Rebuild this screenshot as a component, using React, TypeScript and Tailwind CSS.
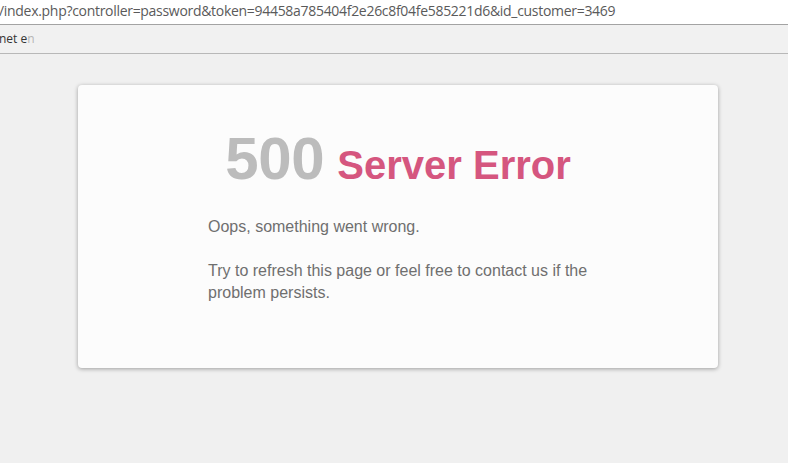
export default function App() {
  return (
    <div className="min-h-[463px] w-full overflow-hidden bg-[#f0f0f0] font-['Liberation_Sans',Arial,sans-serif]">
      {/* Address bar */}
      <div className="h-[25px] border-b border-[#a3a3a3] bg-white">
        <div className="-ml-[1px] whitespace-nowrap font-['Open_Sans',sans-serif] text-[14px] leading-[22px] tracking-[-0.3px] text-[#5a5a5a]">
          /index.php?controller=password&amp;token=94458a785404f2e26c8f04fe585221d6&amp;id_customer=3469
        </div>
      </div>

      {/* Bookmarks bar */}
      <div className="flex h-[29px] items-center border-b border-[#b8b8b8] bg-[#f1f1f1]">
        <span className="-ml-[1px] font-['Open_Sans',sans-serif] text-[12px] text-[#333]">
          net e<span className="text-[#b5b5b5]">n</span>
        </span>
      </div>

      {/* Error card */}
      <div className="ml-[78px] mt-[31px] h-[283px] w-[640px] rounded-[4px] bg-[#fcfcfc] pt-[44px] shadow-[0_1px_4px_rgba(0,0,0,0.35)]">
        <h1 className="flex items-baseline justify-center font-bold leading-[60px]">
          <span className="text-[60px] tracking-[-0.3px] text-[#bcbcbc]">500</span>
          <span className="ml-[13px] text-[40px] text-[#d5567f]">Server Error</span>
        </h1>
        <div className="ml-[130px] mt-[21px] w-[395px] text-[16px] leading-[22px] text-[#6f6f6f]">
          <p>Oops, something went wrong.</p>
          <p className="mt-[22px]">Try to refresh this page or feel free to contact us if the problem persists.</p>
        </div>
      </div>
    </div>
  )
}
